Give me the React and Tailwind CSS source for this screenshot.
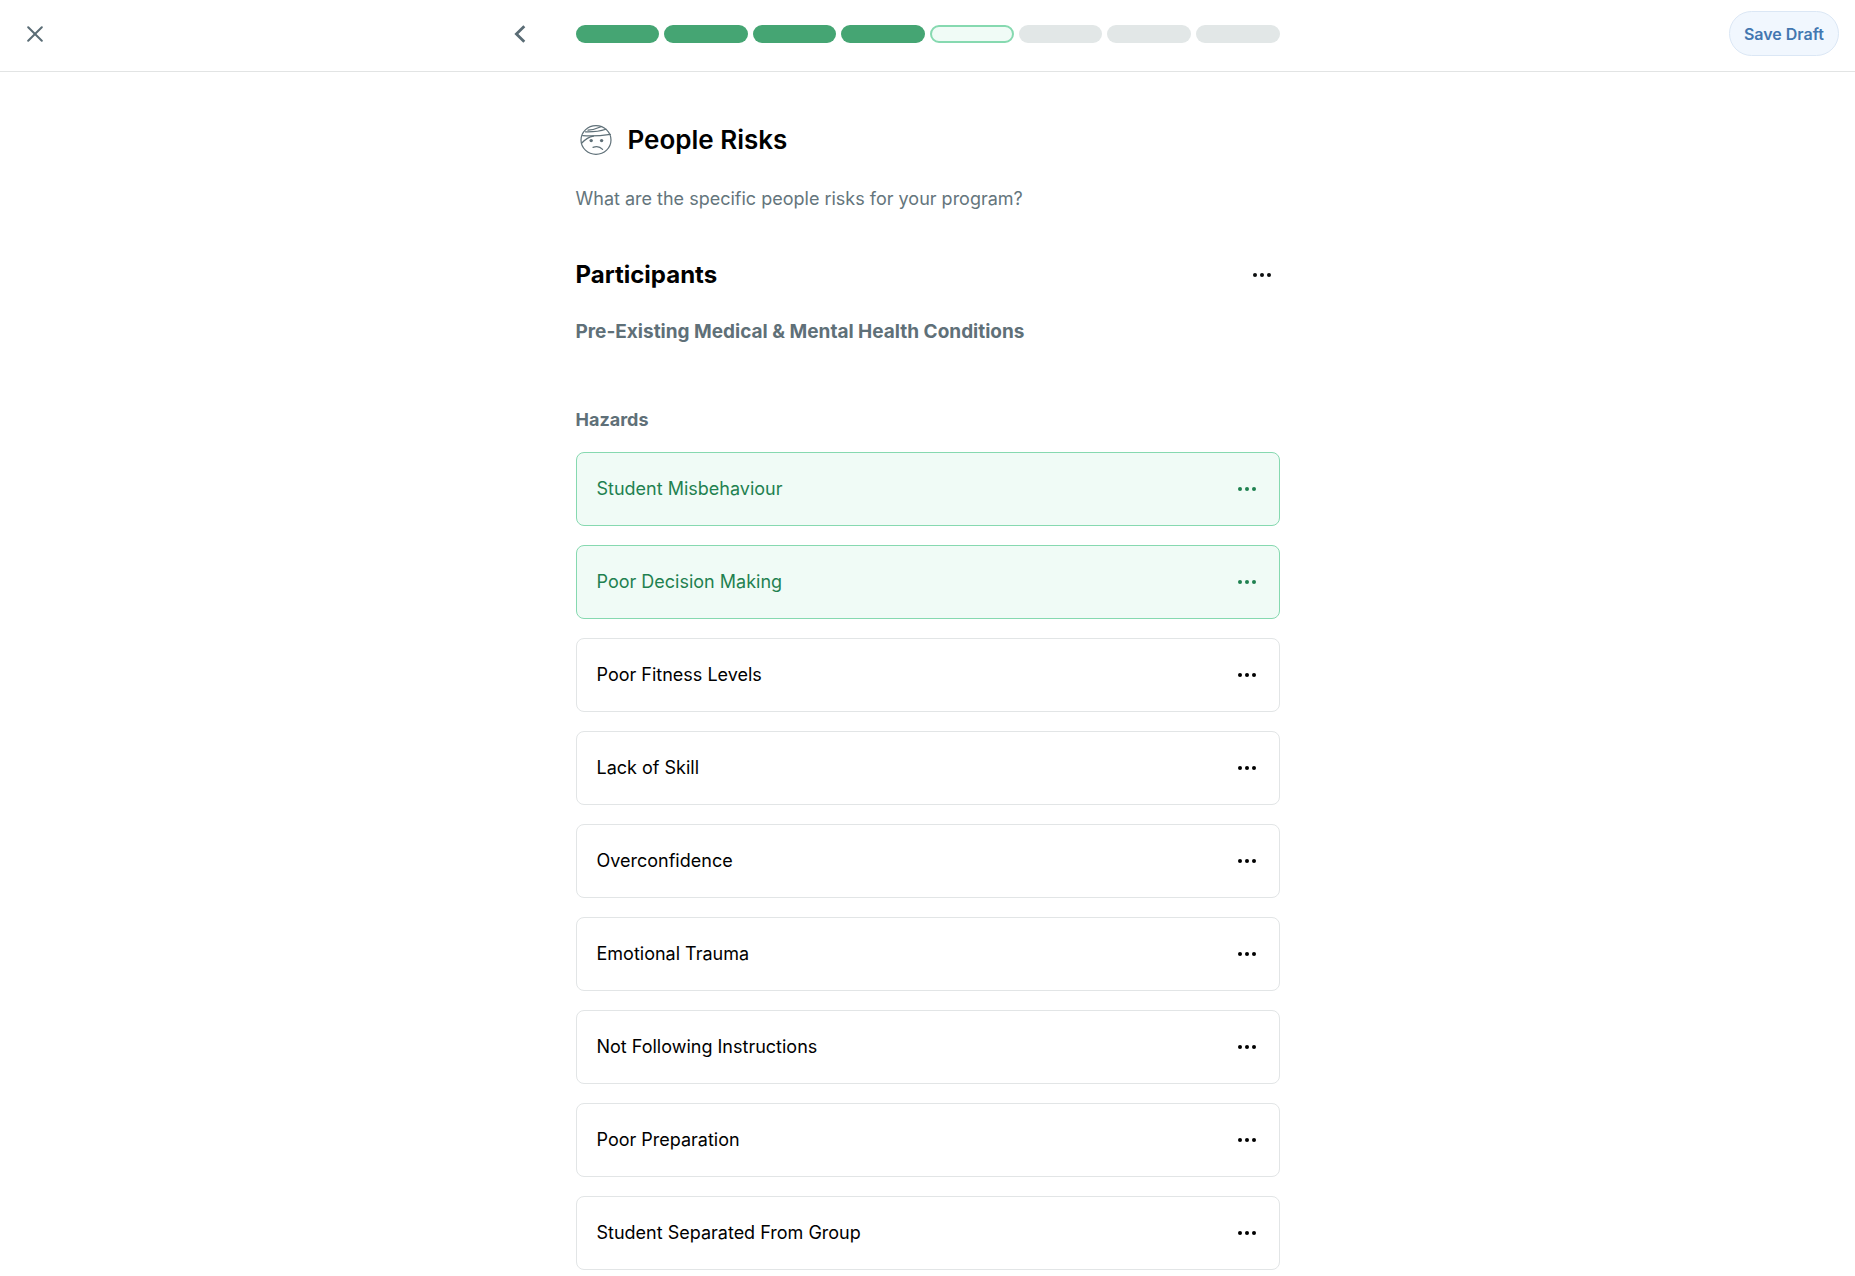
const hazards = [
  { name: "Student Misbehaviour", selected: true },
  { name: "Poor Decision Making", selected: true },
  { name: "Poor Fitness Levels" },
  { name: "Lack of Skill" },
  { name: "Overconfidence" },
  { name: "Emotional Trauma" },
  { name: "Not Following Instructions" },
  { name: "Poor Preparation" },
  { name: "Student Separated From Group" },
];

const steps = ["done", "done", "done", "done", "current", "todo", "todo", "todo"];

const stepStyles = {
  done: "bg-[#45a573]",
  current: "border-2 border-[#86d9b0] bg-[#f0fbf6]",
  todo: "bg-[#e2e7e7]",
};

function Dots() {
  return (
    <svg width="18" height="4" viewBox="0 0 18 4" fill="currentColor" aria-hidden="true">
      <circle cx="2" cy="2" r="2" />
      <circle cx="9" cy="2" r="2" />
      <circle cx="16" cy="2" r="2" />
    </svg>
  );
}

function MoreButton({ label }) {
  return (
    <button type="button" aria-label={label} className="flex size-9 items-center justify-center">
      <Dots />
    </button>
  );
}

function BandagedFace() {
  return (
    <svg
      width="32"
      height="32"
      viewBox="0 0 32 32"
      fill="none"
      stroke="#5f7078"
      strokeWidth="1.2"
      strokeLinecap="round"
      aria-hidden="true"
    >
      <ellipse cx="16" cy="16" rx="15" ry="14.3" />
      <path d="M8 6.2 C13 5.8 17 4.6 21 2.8" />
      <path d="M5.4 7.8 C12 8 20 7.2 26 5.2" />
      <path d="M2.6 11.6 C12 12.4 22 11.6 30.4 10.4" />
      <path d="M1.8 19 C5 15.6 9 13 13.5 12.2" />
      <path d="M13 23.4 C16 22.2 20 22.6 22.6 25.4" />
      <circle cx="11.2" cy="16.6" r="1.7" fill="#5f7078" stroke="none" />
      <circle cx="21.6" cy="16.6" r="1.7" fill="#5f7078" stroke="none" />
    </svg>
  );
}

function Header() {
  return (
    <header className="grid h-[72px] grid-cols-[1fr_704px_1fr] items-center border-b border-[#e2e4e4] pb-1">
      <div className="flex items-center justify-between pl-[17px] pr-10">
        <button type="button" aria-label="Close" className="flex size-9 items-center justify-center">
          <svg width="16" height="16" viewBox="0 0 16 16" stroke="#5a6c75" strokeWidth="2" strokeLinecap="round" aria-hidden="true">
            <path d="M1.2 1.2 L14.8 14.8 M14.8 1.2 L1.2 14.8" />
          </svg>
        </button>
        <button type="button" aria-label="Back" className="flex size-8 items-center justify-center">
          <svg width="12" height="18" viewBox="0 0 12 18" fill="none" stroke="#5a6c75" strokeWidth="2.8" aria-hidden="true">
            <path d="M10.3 1.3 L2.4 9 L10.3 16.7" />
          </svg>
        </button>
      </div>
      <div
        role="progressbar"
        aria-label="Progress"
        aria-valuemin={1}
        aria-valuemax={8}
        aria-valuenow={5}
        className="grid grid-cols-8 gap-[5px]"
      >
        {steps.map((state, i) => (
          <div key={i} className={`h-[18px] rounded-full ${stepStyles[state]}`} />
        ))}
      </div>
      <div className="flex justify-end pr-4">
        <button
          type="button"
          className="h-[45px] rounded-full border border-[#dbe7f5] bg-[#f1f7fe] px-[14px] text-base font-semibold text-[#4377b0]"
        >
          Save Draft
        </button>
      </div>
    </header>
  );
}

export default function App() {
  return (
    <div className="min-h-screen bg-white font-['Inter',sans-serif] text-[#0c0f10]">
      <Header />
      <main className="mx-auto w-full max-w-[704px]">
        <div className="flex items-center gap-4 pt-12">
          <span className="pl-1">
            <BandagedFace />
          </span>
          <h1 className="text-[26px] leading-10 font-semibold text-black">People Risks</h1>
        </div>
        <p className="mt-[25px] text-lg leading-7 text-[#64757c]">What are the specific people risks for your program?</p>

        <div className="mt-11 flex items-center justify-between">
          <h2 className="text-2xl leading-9 font-bold text-black">Participants</h2>
          <MoreButton label="Participants options" />
        </div>
        <h3 className="mt-[25px] text-[19px] leading-7 font-bold text-[#5f7078]">
          Pre-Existing Medical &amp; Mental Health Conditions
        </h3>

        <h3 className="mt-[60px] text-lg leading-7 font-bold text-[#5f7078]">Hazards</h3>
        <ul className="mt-[18px] flex flex-col gap-[19px]">
          {hazards.map((h) => (
            <li
              key={h.name}
              className={`flex h-[74px] items-center justify-between rounded-lg border pl-5 pr-[14px] text-lg ${
                h.selected ? "border-[#86d9b0] bg-[#f0fbf6] text-[#1f8150]" : "border-[#e2e5e6] text-black"
              }`}
            >
              <span>{h.name}</span>
              <MoreButton label={`${h.name} options`} />
            </li>
          ))}
        </ul>
      </main>
    </div>
  );
}
